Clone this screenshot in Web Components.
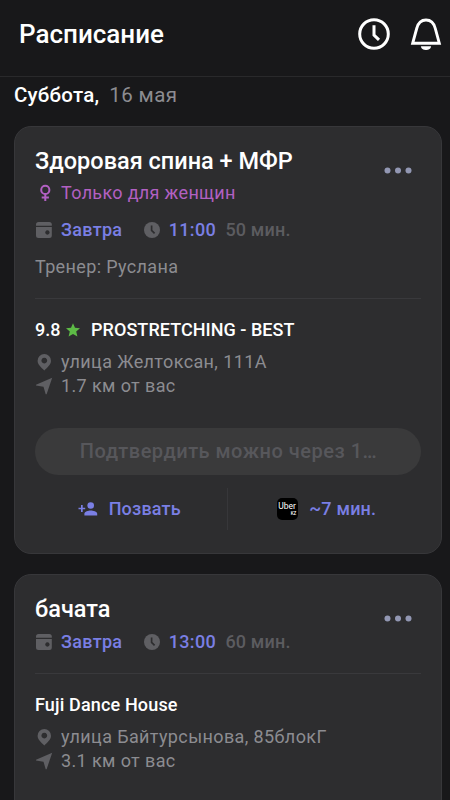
<!DOCTYPE html>
<html lang="ru">
<head>
<meta charset="utf-8">
<title>Расписание</title>
<style>
html,body{margin:0;background:#18181a}
body{height:800px;overflow:hidden;font-family:Roboto,"Noto Sans",sans-serif;color:#fff}
</style>
</head>
<body>
<schedule-app>
  <app-header slot="header">Расписание</app-header>
  <day-title day="Суббота,">16 мая</day-title>
  <class-card name="Здоровая спина + МФР" day="Завтра" time="11:00" length="50 мин." women="Только для женщин" trainer="Тренер: Руслана">
    <place-info slot="place" rating="9.8" address="улица Желтоксан, 111А" distance="1.7 км от вас">PROSTRETCHING - BEST</place-info>
    <confirm-button slot="actions">Подтвердить можно через 1…</confirm-button>
    <card-actions slot="actions" taxi="~7 мин.">Позвать</card-actions>
  </class-card>
  <class-card class="last" name="бачата" day="Завтра" time="13:00" length="60 мин.">
    <place-info slot="place" address="улица Байтурсынова, 85блокГ" distance="3.1 км от вас">Fuji Dance House</place-info>
  </class-card>
</schedule-app>
<script>
const ICONS = {
  history: '<svg width="32" height="32" viewBox="0 0 32 32" fill="none" stroke="#fff" stroke-width="3"><circle cx="16" cy="16" r="14.3"/><path d="M16 7.2V17l5 4.9"/></svg>',
  bell: '<svg width="32" height="33" viewBox="0 0 32 33"><path d="M2.700 25.200L6.700 10.500C8.100 5 11.300 2 16 2s7.900 3 9.300 8.500L29.300 25.200Z" fill="none" stroke="#fff" stroke-width="2.900"/><path d="M10.900 28.300h10.200c-.3 2.500-2.100 3.800-5.100 3.800s-4.800-1.300-5.100-3.800z" fill="#fff"/></svg>',
  more: '<svg width="28" height="7" viewBox="0 0 28 7" fill="#9297b3"><circle cx="3.500" cy="3.500" r="3"/><circle cx="14" cy="3.500" r="3"/><circle cx="24.500" cy="3.500" r="3"/></svg>',
  female: '<svg width="18" height="18" viewBox="0 0 18 18" fill="none" stroke="#b260c2" stroke-width="2"><circle cx="10.300" cy="5.900" r="4.100"/><path d="M10.300 10V17M6.700 13.600h7.200"/></svg>',
  calendar: '<svg width="18" height="18" viewBox="0 0 18 18" fill="#5f5f63"><path d="M1 4.800V3.500Q1 1 3.500 1h10.800q2.500 0 2.500 2.500v1.300z"/><path fill-rule="evenodd" d="M1 6h15.800v8.500q0 2.500-2.500 2.500H3.500Q1 17 1 14.500zM12.400 9.300a2.200 2.200 0 1 0 .01 0z"/></svg>',
  clock: '<svg width="18" height="18" viewBox="0 0 18 18"><circle cx="9" cy="9" r="8" fill="#5f5f63"/><path d="M8.600 4.500v4.800l3 3" fill="none" stroke="#2d2d2f" stroke-width="1.700"/></svg>',
  star: '<svg width="14" height="14" viewBox="0 0 14 14" fill="#5dbb46"><path d="M7 .2l2 4.600 5 .4-3.800 3.300 1.200 5L7 10.900l-4.400 2.600 1.200-5L0 5.200l5-.4z"/></svg>',
  pin: '<svg width="18" height="18" viewBox="0 0 18 18" fill="#5f5f63"><path fill-rule="evenodd" d="M9.300 1a6.700 6.700 0 0 1 6.700 6.700c0 3.900-3.500 6.500-6.700 9.700-3.200-3.200-6.700-5.800-6.700-9.700A6.700 6.700 0 0 1 9.300 1zm0 3.700a2.900 2.900 0 1 0 .01 0z"/></svg>',
  arrow: '<svg width="18" height="18" viewBox="0 0 18 18" fill="#5f5f63"><path d="M17.200.8L1 7.700v.9l7.500 1.100 2.200 7.500h.9z"/></svg>',
  invite: '<svg width="20" height="14" viewBox="0 0 20 14" fill="#7a7fe4"><circle cx="12.700" cy="3.500" r="3.300"/><path d="M6.400 13.400v-1.700c0-2.300 4-3.300 6.300-3.300s6.500 1 6.500 3.300v1.700z"/><path d="M3 3.100h1.700v2.600h2.500v1.600H4.700v2.600H3V7.300H.5V5.700H3z"/></svg>'
};
function define(tag, html) {
  customElements.define(tag, class extends HTMLElement {
    connectedCallback() {
      if (this.shadowRoot) return;
      const root = this.attachShadow({ mode: 'open' });
      root.innerHTML = typeof html === 'function' ? html(n => this.getAttribute(n) || '', n => this.hasAttribute(n)) : html;
    }
  });
}
define('ui-icon', a => `<style>:host{display:block;flex:none}svg{display:block}</style>${ICONS[a('name')]}`);
define('schedule-app', `<style>
  :host{display:flex;flex-direction:column;height:800px;overflow:hidden}
  main{display:flex;flex:1;flex-direction:column;gap:20px;padding:6px 8px 0 14px}
  ::slotted(class-card){flex:none}
  ::slotted(.last){height:300px}
  </style><slot name="header"></slot><main><slot></slot></main>`);
define('app-header', `<style>
  :host{display:flex;box-sizing:border-box;height:77px;flex:none;align-items:flex-start;padding:18px 8px 0 19px;border-bottom:1px solid #29292b}
  h1{margin:1px auto 0 0;font-size:26px;font-weight:500;line-height:31px}
  ui-icon+ui-icon{margin-left:20px}
  </style><h1><slot></slot></h1><ui-icon name="history"></ui-icon><ui-icon name="bell"></ui-icon>`);
define('day-title', a => `<style>
  :host{display:flex;gap:10px;height:23px;font-size:20.500px;line-height:25px;white-space:pre}
  b{font-weight:500;letter-spacing:.22px}span{color:#8c8c91;letter-spacing:.4px}
  </style><b>${a('day')}</b><span><slot></slot></span>`);
define('class-card', (a, has) => `<style>
  :host{display:flex;flex-direction:column;box-sizing:border-box;width:428px;padding:20px 20px 23px;border:1px solid #37373a;border-radius:17px;background:#2d2d2f;font-size:18px;line-height:24px;letter-spacing:.36px;white-space:nowrap}
  .head{display:flex;justify-content:space-between;height:28px}
  h2{margin:0;font-size:23.500px;font-weight:500;line-height:28px;letter-spacing:0}
  .head ui-icon{margin:20px 9px 0 0}
  .row{display:flex;align-items:center;gap:8px;height:24px}
  .women{margin-top:6px;color:#b260c2;letter-spacing:.32px}
  .when{margin-top:${has('women') ? 13 : 7}px;color:#7a7fe4;font-weight:500;letter-spacing:.3px}
  b{font-weight:500}
  .day{margin-right:12.500px}
  .length{color:#5c5c60;letter-spacing:.15px;margin-left:1.500px}
  .trainer{margin-top:13px;color:#8c8c91}
  hr{width:386px;margin:19px 0;border:0;height:1px;background:#39393c}
  </style>
  <div class="head"><h2>${a('name')}</h2><ui-icon name="more"></ui-icon></div>
  ${has('women') ? `<div class="row women"><ui-icon name="female"></ui-icon><span>${a('women')}</span></div>` : ''}
  <div class="row when"><ui-icon name="calendar"></ui-icon><b class="day">${a('day')}</b><ui-icon name="clock"></ui-icon><b>${a('time')}</b><span class="length">${a('length')}</span></div>
  ${has('trainer') ? `<div class="trainer">${a('trainer')}</div>` : ''}
  <hr><slot name="place"></slot><slot name="actions"></slot>`);
define('place-info', (a, has) => `<style>
  :host{display:block;color:#8c8c91}
  .name{display:flex;align-items:center;height:24px;margin-bottom:8px;color:#fff;font-weight:500;letter-spacing:${has('rating') ? .04 : .15}px}
  .name ui-icon{margin:0 11.500px 0 5px}
  .row{display:flex;align-items:center;gap:8px;height:24px;letter-spacing:.38px}
  </style>
  <div class="name">${has('rating') ? `<span>${a('rating')}</span><ui-icon name="star"></ui-icon>` : ''}<span><slot></slot></span></div>
  <div class="row"><ui-icon name="pin"></ui-icon><span>${a('address')}</span></div>
  <div class="row"><ui-icon name="arrow"></ui-icon><span>${a('distance')}</span></div>`);
define('confirm-button', `<style>
  :host{display:block;margin-top:30px}
  button{display:block;width:386px;height:47px;border:0;border-radius:24px;padding:0 0 0 1px;background:#3a3a3b;color:#57575b;font:500 20px/47px Roboto,"Noto Sans",sans-serif;letter-spacing:.5px}
  </style><button disabled><slot></slot></button>`);
define('card-actions', a => `<style>
  :host{display:flex;height:42px;margin-top:13px;color:#7a7fe4;font-weight:500;letter-spacing:.2px}
  div{flex:1;display:flex;align-items:center;justify-content:center;gap:11px;padding-right:3px}
  div+div{border-left:1px solid #37373a;padding:0 0 0 5px}
  .uber{display:flex;flex-direction:column;width:21px;height:22px;border-radius:5px;background:#000;color:#fff;letter-spacing:0;line-height:1}
  .uber span{font-size:8.500px;font-weight:400;line-height:9px;margin:4px 0 0 1px;letter-spacing:0}
  .uber small{font-size:4.500px;line-height:5px;align-self:flex-end;margin-right:2px}
  </style><div><ui-icon name="invite"></ui-icon><span><slot></slot></span></div><div><span class="uber"><span>Uber</span><small>KZ</small></span><span>${a('taxi')}</span></div>`);
</script>
</body>
</html>
